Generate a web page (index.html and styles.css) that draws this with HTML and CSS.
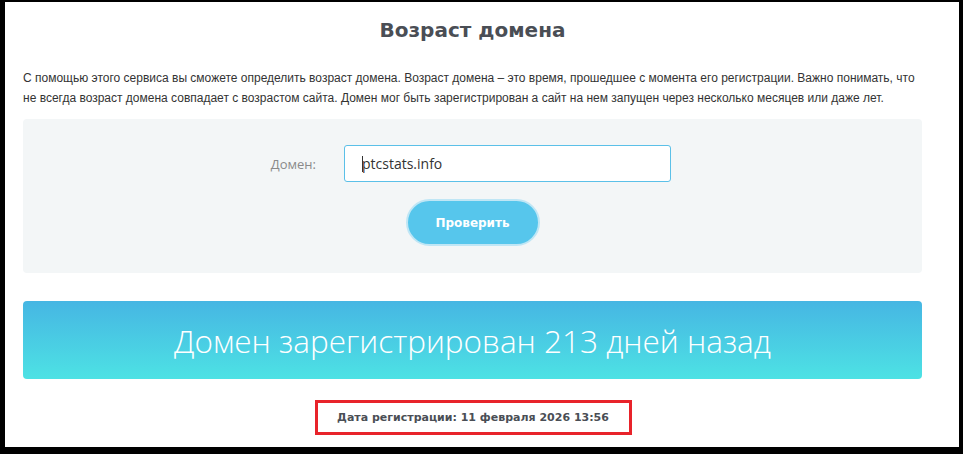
FILE: index.html
```html
<!DOCTYPE html>
<html lang="ru">
<head>
<meta charset="utf-8">
<title>Возраст домена</title>
<link rel="stylesheet" href="styles.css">
</head>
<body>
<div class="frame">
  <main class="content">
    <h1 class="title">Возраст домена</h1>
    <p class="intro">С помощью этого сервиса вы сможете определить возраст домена. Возраст домена – это время, прошедшее с момента его регистрации. Важно понимать, что не всегда возраст домена совпадает с возрастом сайта. Домен мог быть зарегистрирован а сайт на нем запущен через несколько месяцев или даже лет.</p>
    <form class="panel">
      <div class="field">
        <label class="field-label" for="domain">Домен:</label>
        <div class="field-input"><span class="caret"></span><span class="input-text">ptcstats.info</span></div>
      </div>
      <button type="button" class="btn">Проверить</button>
    </form>
    <div class="result">Домен зарегистрирован 213 дней назад</div>
    <div class="date-row"><div class="date-box">Дата регистрации: 11 февраля 2026 13:56</div></div>
  </main>
</div>
</body>
</html>
```
FILE: styles.css
```css
html, body { margin: 0; padding: 0; }
body {
  background: #000;
  width: 963px;
  height: 454px;
  overflow: hidden;
}
.frame {
  background: #fff;
  margin: 2px 4px 0 5px;
  height: 445px;
  overflow: hidden;
}
.content {
  padding: 0 37px 0 18px;
}
.title {
  margin: 0;
  padding-top: 14px;
  height: 28px;
  text-align: center;
  font-family: "DejaVu Sans", sans-serif;
  font-weight: bold;
  font-size: 20px;
  line-height: 28px;
  color: #4a4e55;
}
.intro {
  margin: 24px 0 0 0;
  font-family: "Liberation Sans", sans-serif;
  font-size: 12px;
  line-height: 20px;
  color: #333;
}
.panel {
  margin-top: 11px;
  background: #f3f6f7;
  border-radius: 4px;
  height: 154px;
  display: flex;
  flex-direction: column;
  align-items: center;
  padding-top: 26px;
  box-sizing: border-box;
}
.field {
  display: flex;
  align-items: center;
  margin-left: -33px;
}
.field-label {
  width: 75px;
  text-align: right;
  padding-right: 28px;
  font-family: "Open Sans", sans-serif;
  font-size: 13px;
  color: #8a8a8a;
}
.field-input {
  width: 327px;
  height: 37px;
  box-sizing: border-box;
  border: 1px solid #5bc0e8;
  border-radius: 3px;
  background: #fff;
  display: flex;
  align-items: center;
  padding-left: 17px;
  font-family: "Open Sans", sans-serif;
  font-size: 14px;
  color: #333;
}
.caret {
  display: inline-block;
  width: 1px;
  height: 16px;
  background: #333;
  margin-right: -1px;
}
.btn {
  margin-top: 17px;
  width: 134px;
  height: 47px;
  border-radius: 24px;
  border: 2px solid #bfe6f5;
  background: #56c6ec;
  color: #fff;
  font-family: "DejaVu Sans", sans-serif;
  font-weight: bold;
  font-size: 12px;
}
.result {
  margin-top: 28px;
  height: 78px;
  border-radius: 4px;
  background: linear-gradient(to bottom, #46b6e3, #4de2e4);
  display: flex;
  align-items: center;
  justify-content: center;
  color: #fff;
  font-family: "Open Sans", sans-serif;
  font-weight: 300;
  font-size: 31.5px;
}
.date-row {
  display: flex;
  justify-content: center;
  margin-top: 21px;
}
.date-box {
  box-sizing: border-box;
  width: 317px;
  height: 35px;
  border: 3px solid #e8232a;
  display: flex;
  align-items: center;
  justify-content: center;
  font-family: "DejaVu Sans", sans-serif;
  font-weight: bold;
  font-size: 11px;
  color: #4a4e55;
  margin-left: 1px;
}
```
